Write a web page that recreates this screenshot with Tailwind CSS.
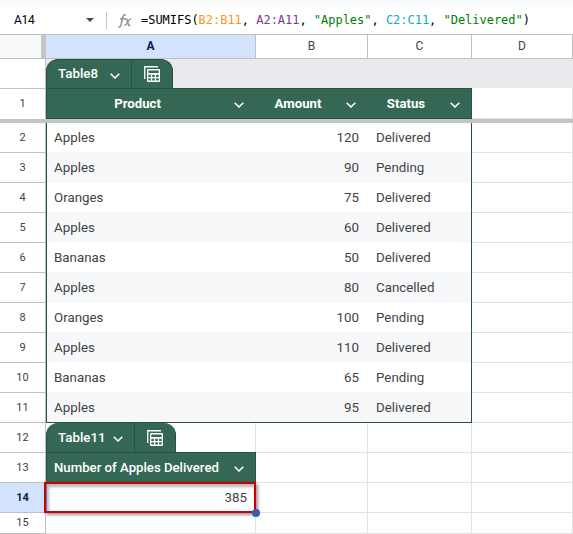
<!DOCTYPE html>
<html lang="en">
<head>
<meta charset="utf-8">
<title>Sheet</title>
<script src="https://cdn.jsdelivr.net/npm/@tailwindcss/browser@4"></script>
</head>
<body class="w-[573px] h-[534px] overflow-hidden bg-white font-[Roboto,sans-serif] text-[13.333px] text-[#434343]">
<svg class="hidden">
  <symbol id="chev" viewBox="0 0 10 6"><path d="M.7.7 5 5 9.3.7" fill="none" stroke="currentColor" stroke-width="1.5"/></symbol>
  <symbol id="calc" viewBox="0 0 16 16"><path d="M.75 13V.75H14" fill="none" stroke="currentColor" stroke-width="1.3"/><path fill="currentColor" fill-rule="evenodd" d="M4 3h11a1 1 0 0 1 1 1v11a1 1 0 0 1-1 1H4a1 1 0 0 1-1-1V4a1 1 0 0 1 1-1zM4.3 4.4v2.7h10.4V4.4zM4.3 8.7v2.3h2.6V8.7zM8.2 8.7v2.3h2.6V8.7zM12.1 8.7v2.3h2.6V8.7zM4.3 12.3v2.3h2.6v-2.3zM8.2 12.3v2.3h2.6v-2.3zM12.1 12.3v2.3h2.6v-2.3z"/></symbol>
</svg>
<div class="h-[6px] bg-[#f9fbfd]"></div>
<div class="h-[29px] border-b border-[#c0c0c0] flex items-center text-black">
  <div class="w-[86px] pl-[14px] text-[12px] tracking-[-0.3px]">A14</div>
  <svg class="w-2 h-1" viewBox="0 0 8 4"><path d="M0 0h8L4 4z" fill="#444746"/></svg>
  <div class="ml-3 w-px h-[17px] bg-[#c7c7c7]"></div>
  <svg class="ml-[11px] mr-[9px] mt-[2px] w-[14px] h-[14px]" viewBox="0 0 14 14" fill="none" stroke="#969696"><path d="M.3 12.6c1.6.8 2.4-.3 2.8-2L4.8 3C5.200 1.200 6.200.5 8 1.100M2 4.800h5" stroke-width="1.600"/><path d="M6.600 5.200c1.900-.7 2.500.3 2.900 2.300l.5 2.200c.3 1.500.9 2 2.400 1.300" stroke-width="1.700"/><path d="M13.400 5c-1.300-.5-2.300.5-3.600 2.900S7.500 11.800 6 11.200" stroke-width="1.200"/></svg>
  <div class="font-['DejaVu_Sans_Mono',monospace] text-[12px] tracking-[-0.024px] whitespace-pre">=SUMIFS(<span class="text-[#f7981d]">B2:B11</span>, <span class="text-[#7e3794]">A2:A11</span>, <span class="text-[#008000]">"Apples"</span>, <span class="text-[#11a9cc]">C2:C11</span>, <span class="text-[#008000]">"Delivered"</span>)</div>
</div>
<div class="h-6 flex border-b border-[#c0c0c0] text-[12px] text-center leading-[23px]">
  <div class="w-[46px] bg-[#f8f9fa] border-r-[5px] border-[#c4c4c4]"></div>
  <div class="w-[210px] bg-[#d3e3fd] border-r border-[#c0c0c0] font-bold text-[#041e49]">A</div>
  <div class="w-[112px] border-r border-[#c0c0c0]">B</div>
  <div class="w-[104px] border-r border-[#c0c0c0]">C</div>
  <div class="w-[101px] border-r border-[#c0c0c0]">D</div>
</div>
<div class="flex h-[60px]">
  <div class="w-[46px] border-r border-[#c0c0c0] text-[11px] text-center">
    <div class="h-[30px] border-b border-[#c0c0c0]"></div>
    <div class="h-[30px] leading-[30px]">1</div>
  </div>
  <div class="flex-1">
    <div class="h-[29px] bg-[#e8eaed]">
      <div class="w-[127px] h-[29px] flex rounded-t-[12px] bg-[#356854] border border-b-0 border-[#275243] text-white">
        <div class="w-[85px] border-r border-[#275243] flex items-center pl-[11px] font-medium"><span class="w-[52px]">Table8</span><svg class="w-[10px] h-[6px] mt-[3px]"><use href="#chev"/></svg></div>
        <svg class="w-4 h-4 ml-3 mt-[6px]"><use href="#calc"/></svg>
      </div>
    </div>
    <div class="flex">
      <div class="w-[426px] h-[31px] flex items-center border border-[#275243] bg-[#356854] text-white font-bold text-[13.2px] pt-[1px]">
        <div class="w-[209px] flex items-center"><span class="w-[181px] text-center">Product</span><svg class="w-[10px] h-[6px] ml-[6px] mt-[2px]"><use href="#chev"/></svg></div>
        <div class="w-[112px] flex items-center"><span class="w-[84px] text-center">Amount</span><svg class="w-[10px] h-[6px] ml-[6px] mt-[2px]"><use href="#chev"/></svg></div>
        <div class="w-[103px] flex items-center"><span class="w-[76px] text-center">Status</span><svg class="w-[10px] h-[6px] ml-[6px] mt-[2px]"><use href="#chev"/></svg></div>
      </div>
      <div class="w-[101px] border-r border-b border-[#e1e1e1]"></div>
    </div>
  </div>
</div>
<div class="h-1 bg-[#c4c4c4]"></div>
<div class="flex">
  <div id="nums" class="w-[46px] border-r border-[#c0c0c0] text-[11px] text-center"></div>
  <div>
    <div class="flex">
      <div id="data" class="w-[426px] h-[300px] border border-t-0 border-[#275243]"></div>
      <div id="dcol" class="w-[101px]"></div>
    </div>
    <div class="flex h-[111px]">
      <div class="w-[210px] border-r border-[#e1e1e1]">
        <div class="w-[130px] h-[29px] flex rounded-t-[12px] bg-[#356854] border-x border-[#275243] text-white">
          <div class="w-[88px] border-r border-[#275243] flex items-center pl-[11px] font-medium"><span class="w-[55px]">Table11</span><svg class="w-[10px] h-[6px] mt-[3px]"><use href="#chev"/></svg></div>
          <svg class="w-4 h-4 ml-3 mt-[7px]"><use href="#calc"/></svg>
        </div>
        <div class="w-[210px] h-[31px] bg-[#356854] border border-[#275243] text-white font-medium flex items-center pl-[7px]"><span class="w-[180px] whitespace-nowrap text-[13.2px]">Number of Apples Delivered</span><svg class="w-[10px] h-[6px] mt-[3px]"><use href="#chev"/></svg></div>
        <div class="relative z-10 -ml-[2px] -mt-[1px] w-[212px] h-[31px] border-2 border-[#cc0000] text-right pr-[7px] leading-[28px] shadow-[2px_2px_3px_rgba(0,0,0,0.4),inset_1px_0_0_#5b7fd0,inset_3px_3px_3px_rgba(0,0,0,0.28)]">385
          <div class="absolute -z-10 -right-[6px] -bottom-[6px] w-2 h-2 rounded-full bg-[#3c5bb5]"></div>
        </div>
        <div class="h-[21px] w-[210px] border-b border-[#e1e1e1]"></div>
      </div>
      <div id="tail" class="w-[317px]"></div>
    </div>
  </div>
</div>
<script>
const rows=[["Apples",120,"Delivered"],["Apples",90,"Pending"],["Oranges",75,"Delivered"],["Apples",60,"Delivered"],["Bananas",50,"Delivered"],["Apples",80,"Cancelled"],["Oranges",100,"Pending"],["Apples",110,"Delivered"],["Bananas",65,"Pending"],["Apples",95,"Delivered"]];
document.getElementById("data").innerHTML=rows.map((r,i)=>
 `<div class="flex items-center ${i===9?"h-[30px] pt-[1px]":i%2?"h-[31px]":"h-[29px]"} ${i%2?"bg-[#f6f8fa]":"bg-white"}"><div class="w-[209px] pl-[7px]">${r[0]}</div><div class="w-[112px] text-right pr-[9px]">${r[1]}</div><div class="pl-[8px]">${r[2]}</div></div>`).join("");
document.getElementById("dcol").innerHTML=rows.map(()=>`<div class="h-[30px] border-b border-r border-[#e1e1e1]"></div>`).join("");
let n="";
for(let i=2;i<=15;i++) n+=`<div class="border-b border-[#c0c0c0] ${i===15?"h-[21px] leading-[20px]":"h-[30px] leading-[29px]"} ${i===14?"bg-[#d3e3fd] font-bold text-[#041e49]":""}">${i}</div>`;
document.getElementById("nums").innerHTML=n;
document.getElementById("tail").innerHTML=[0,1,2,3].map(i=>`<div class="flex border-b border-[#e1e1e1] ${i===3?"h-[21px]":"h-[30px]"}"><div class="w-[112px] border-r border-[#e1e1e1]"></div><div class="w-[104px] border-r border-[#e1e1e1]"></div><div class="w-[101px] border-r border-[#e1e1e1]"></div></div>`).join("");
</script>
</body>
</html>
